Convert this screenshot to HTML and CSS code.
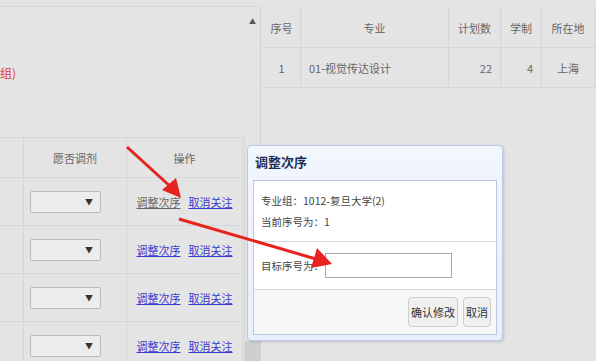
FILE: index.html
```html
<!DOCTYPE html>
<html lang="zh-CN">
<head>
  <meta charset="UTF-8" />
  <title>调整次序</title>
  <link rel="stylesheet" href="styles.css">
</head>
<body>

  <div class="page">
    <div class="left">
      <div class="left-body">
        <div class="left-top">
          <span class="group-tail">组)</span>
        </div>
        <table class="mine">
          <thead>
            <tr><th class="c0"></th><th class="c1">愿否调剂</th><th class="c2">操作</th><th></th></tr>
          </thead>
          <tbody>
            <tr><td></td><td><span class="sel">▼</span></td><td><a class="visited">调整次序</a><a>取消关注</a></td><td></td></tr>
            <tr><td></td><td><span class="sel">▼</span></td><td><a>调整次序</a><a>取消关注</a></td><td></td></tr>
            <tr><td></td><td><span class="sel">▼</span></td><td><a>调整次序</a><a>取消关注</a></td><td></td></tr>
            <tr><td></td><td><span class="sel">▼</span></td><td><a>调整次序</a><a>取消关注</a></td><td></td></tr>
          </tbody>
        </table>
      </div>
      <div class="scrollbar">
        <span class="up">▲</span>
        <div class="thumb"></div>
      </div>
    </div>

    <div class="right">
      <table class="majors">
        <thead>
          <tr><th class="w-no">序号</th><th class="w-major">专业</th><th class="w-plan">计划数</th><th class="w-year">学制</th><th class="w-loc">所在地</th><th></th></tr>
        </thead>
        <tbody>
          <tr><td class="center">1</td><td>01-视觉传达设计</td><td class="num">22</td><td class="num">4</td><td class="center">上海</td><td></td></tr>
        </tbody>
      </table>
    </div>
  </div>

  <div class="dialog">
    <div class="dialog-title">调整次序</div>
    <div class="dialog-box">
      <div class="info">
        <p>专业组：1012-复旦大学(2)</p>
        <p>当前序号为：1</p>
      </div>
      <div class="target">
        <label for="target">目标序号为：</label>
        <input type="text" id="target" />
      </div>
      <div class="footer">
        <button>确认修改</button>
        <button>取消</button>
      </div>
    </div>
  </div>

  <svg class="arrows" width="596" height="361" viewBox="0 0 596 361">
    <line x1="127" y1="147" x2="172" y2="188" stroke="#e8231f" stroke-width="3" />
    <polygon points="181,198 162,190 176,178" fill="#e8231f" />
    <line x1="179" y1="219" x2="316" y2="259" stroke="#e8231f" stroke-width="3" />
    <polygon points="332,264 311,268 317,248" fill="#e8231f" />
  </svg>

</body>
</html>
```

FILE: styles.css
```css
body {
  margin: 0;
  width: 596px;
  height: 361px;
  overflow: hidden;
  background-color: #e4e4e4;
  font-family: 'Noto Sans CJK SC', 'Noto Sans', sans-serif;
  font-size: 11px;
  color: #666;
}

.page {
  display: flex;
  height: 361px;
}

.left {
  width: 260px;
  display: flex;
  border-top: 1px solid #d6d6d6;
  margin-top: 6px;
  border-right: 1px solid #d2d2d2;
}

.left-body {
  width: 245px;
}

.left-top {
  height: 130px;
  display: flex;
  align-items: center;
}

.group-tail {
  color: #d9403a;
  font-size: 12px;
}

.scrollbar {
  width: 15px;
  display: flex;
  flex-direction: column;
  align-items: center;
}

.up {
  font-size: 7px;
  color: #555;
  margin-top: 9px;
}

.thumb {
  margin-top: auto;
  width: 15px;
  height: 20px;
  background: #cfcfcf;
}

table {
  border-collapse: collapse;
  table-layout: fixed;
}

.mine {
  width: 245px;
  border-top: 1px solid #d6d6d6;
}

.mine th {
  height: 39px;
  font-weight: normal;
  color: #666;
  border-right: 1px solid #d6d6d6;
  border-bottom: 1px solid #d6d6d6;
  padding: 0;
}

.mine .c0 { width: 23px; }
.mine .c1 { width: 102px; }
.mine .c2 { width: 115px; }

.mine td {
  height: 47px;
  border-right: 1px solid #d6d6d6;
  border-bottom: 1px solid #d6d6d6;
  padding: 0;
  text-align: center;
}

.mine td:nth-child(2) {
  text-align: left;
  padding-left: 6px;
}

.sel {
  display: inline-flex;
  justify-content: flex-end;
  align-items: center;
  box-sizing: border-box;
  width: 71px;
  height: 22px;
  padding-right: 7px;
  background: #ececec;
  border: 1px solid #b9b9b9;
  border-radius: 2px;
  font-size: 8px;
  color: #333;
}

.mine a {
  color: #3a3ad0;
  text-decoration: underline;
  font-size: 11px;
  margin: 0 4px;
}

.mine a.visited {
  color: #666;
}

.right {
  flex: 1;
  padding-top: 8px;
  padding-left: 2px;
}

.majors {
  width: 334px;
}

.majors th {
  height: 39px;
  font-weight: normal;
  color: #666;
  border-right: 1px solid #d6d6d6;
  border-bottom: 1px solid #d6d6d6;
  padding: 0;
}

.majors td {
  height: 39px;
  border-right: 1px solid #d6d6d6;
  border-bottom: 1px solid #d6d6d6;
  padding: 0 8px;
  color: #666;
}

.w-no { width: 37px; }
.w-major { width: 147px; }
.w-plan { width: 51px; }
.w-year { width: 40px; }
.w-loc { width: 52px; }

.center { text-align: center; }
.num { text-align: right; }

.dialog {
  position: absolute;
  left: 247px;
  top: 145px;
  width: 256px;
  height: 196px;
  box-sizing: border-box;
  background: linear-gradient(#f2f6fd, #e8eefb);
  border: 1px solid #b9c7e8;
  border-radius: 4px;
  padding: 0 5px 5px;
  display: flex;
  flex-direction: column;
  box-shadow: 1px 1px 3px rgba(0, 0, 0, 0.15);
}

.dialog-title {
  height: 34px;
  line-height: 32px;
  font-size: 13px;
  font-weight: bold;
  color: #1f2e55;
  padding-left: 2px;
}

.dialog-box {
  flex: 1;
  background: white;
  border: 1px solid #bcc8e4;
  display: flex;
  flex-direction: column;
  font-size: 10.5px;
}

.info {
  height: 61px;
  border-bottom: 1px solid #d8d8d8;
  padding: 10px 0 0 7px;
  box-sizing: border-box;
  color: #444;
}

.info p {
  margin: 0 0 2px;
  line-height: 19px;
}

.target {
  height: 47px;
  border-bottom: 1px solid #d8d8d8;
  display: flex;
  align-items: center;
  padding-left: 7px;
  color: #444;
}

.target input {
  width: 127px;
  height: 25px;
  box-sizing: border-box;
  border: 1px solid #aaa;
  margin: 0 0 0 1px;
}

.footer {
  flex: 1;
  background: #f7f7f7;
  display: flex;
  justify-content: flex-end;
  align-items: center;
  gap: 5px;
  padding-right: 5px;
}

.footer button {
  font-family: inherit;
  font-size: 11px;
  color: #333;
  height: 30px;
  padding: 0 2px;
  background: #f0f0f0;
  border: 1px solid #ccc;
  border-radius: 4px;
}

.arrows {
  position: absolute;
  left: 0;
  top: 0;
}
```
